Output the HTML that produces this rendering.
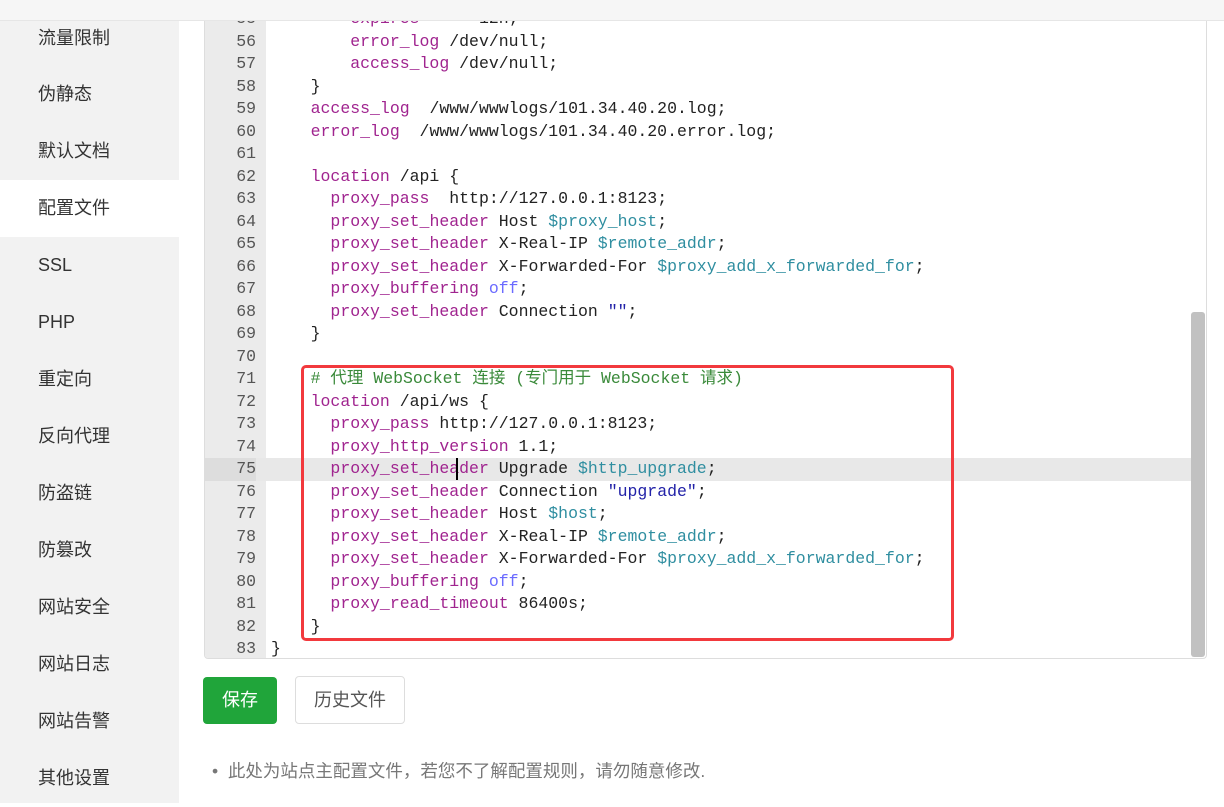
<!DOCTYPE html>
<html><head><meta charset="utf-8"><style>
*{margin:0;padding:0;box-sizing:border-box}
body{width:1224px;height:803px;overflow:hidden;background:#fff;font-family:"Liberation Sans","Noto Sans CJK SC",sans-serif;position:relative}
.top{position:absolute;left:0;top:0;width:1224px;height:21px;background:#f6f6f6;border-bottom:1px solid #e6e6e6;z-index:5}
.side{position:absolute;left:0;top:0;width:179px;height:803px;background:#f2f2f2}
.side div{position:absolute;left:0;width:179px;height:57px;line-height:57px;padding-left:38px;font-size:18px;color:#333}
.side .act{background:#fff}
.ed{position:absolute;left:204px;top:0;width:1003px;height:659px;border:1px solid #ddd;border-top:none;border-radius:0 0 4px 4px;overflow:hidden}
.gut{position:absolute;left:0;top:0;width:61px;height:659px;background:#ebebeb}
.code{position:absolute;left:0;top:8px;width:1000px;font-family:"Liberation Mono","Noto Sans CJK SC",monospace;font-size:16.5px;line-height:22.52px;color:#222}
.l{height:22.52px;white-space:pre;position:relative}
.n{display:inline-block;width:51px;text-align:right;color:#555;margin-right:15px}
.hl{background:#e8e8e8}
.k{color:#a0248f}.v{color:#2f8ea0}.s{color:#2222a8}.o{color:#6b6bff}.c{color:#3a8a3a}
.sb{position:absolute;left:986px;top:312px;width:14px;height:345px;background:#c1c1c1;border-radius:3px}
.red{position:absolute;left:301px;top:365px;width:653px;height:276px;border:3px solid #f2393d;border-radius:5px;z-index:3}
.btn1{position:absolute;left:203px;top:677px;width:74px;height:47px;background:#20a53a;color:#fff;border-radius:4px;font-size:18px;text-align:center;line-height:47px}
.btn2{position:absolute;left:295px;top:676px;width:110px;height:48px;border:1px solid #ddd;border-radius:4px;color:#555;font-size:18px;text-align:center;line-height:46px}
.tip{position:absolute;left:212px;top:758px;font-size:17.5px;color:#777}
.cur{position:absolute;left:456px;top:458px;width:2px;height:22px;background:#000;z-index:4}
</style></head><body>
<div class="top"></div>
<div class="side">
<div style="top:10px">流量限制</div>
<div style="top:66px">伪静态</div>
<div style="top:123px">默认文档</div>
<div class="act" style="top:180px">配置文件</div>
<div style="top:237px">SSL</div>
<div style="top:294px">PHP</div>
<div style="top:351px">重定向</div>
<div style="top:408px">反向代理</div>
<div style="top:465px">防盗链</div>
<div style="top:522px">防篡改</div>
<div style="top:579px">网站安全</div>
<div style="top:636px">网站日志</div>
<div style="top:693px">网站告警</div>
<div style="top:750px">其他设置</div>
</div>
<div class="ed">
<div class="gut"></div>
<div class="code">
<div class="l"><span class="n">55</span>        <span class="k">expires</span>      12h;</div>
<div class="l"><span class="n">56</span>        <span class="k">error_log</span> /dev/null;</div>
<div class="l"><span class="n">57</span>        <span class="k">access_log</span> /dev/null;</div>
<div class="l"><span class="n">58</span>    }</div>
<div class="l"><span class="n">59</span>    <span class="k">access_log</span>  /www/wwwlogs/101.34.40.20.log;</div>
<div class="l"><span class="n">60</span>    <span class="k">error_log</span>  /www/wwwlogs/101.34.40.20.error.log;</div>
<div class="l"><span class="n">61</span></div>
<div class="l"><span class="n">62</span>    <span class="k">location</span> /api {</div>
<div class="l"><span class="n">63</span>      <span class="k">proxy_pass</span>  http://127.0.0.1:8123;</div>
<div class="l"><span class="n">64</span>      <span class="k">proxy_set_header</span> Host <span class="v">$proxy_host</span>;</div>
<div class="l"><span class="n">65</span>      <span class="k">proxy_set_header</span> X-Real-IP <span class="v">$remote_addr</span>;</div>
<div class="l"><span class="n">66</span>      <span class="k">proxy_set_header</span> X-Forwarded-For <span class="v">$proxy_add_x_forwarded_for</span>;</div>
<div class="l"><span class="n">67</span>      <span class="k">proxy_buffering</span> <span class="o">off</span>;</div>
<div class="l"><span class="n">68</span>      <span class="k">proxy_set_header</span> Connection <span class="s">""</span>;</div>
<div class="l"><span class="n">69</span>    }</div>
<div class="l"><span class="n">70</span></div>
<div class="l"><span class="n">71</span>    <span class="c"># 代理 WebSocket 连接 (专门用于 WebSocket 请求)</span></div>
<div class="l"><span class="n">72</span>    <span class="k">location</span> /api/ws {</div>
<div class="l"><span class="n">73</span>      <span class="k">proxy_pass</span> http://127.0.0.1:8123;</div>
<div class="l"><span class="n">74</span>      <span class="k">proxy_http_version</span> 1.1;</div>
<div class="l hl"><span class="n" style="background:#ddd">75</span>      <span class="k">proxy_set_header</span> Upgrade <span class="v">$http_upgrade</span>;</div>
<div class="l"><span class="n">76</span>      <span class="k">proxy_set_header</span> Connection <span class="s">"upgrade"</span>;</div>
<div class="l"><span class="n">77</span>      <span class="k">proxy_set_header</span> Host <span class="v">$host</span>;</div>
<div class="l"><span class="n">78</span>      <span class="k">proxy_set_header</span> X-Real-IP <span class="v">$remote_addr</span>;</div>
<div class="l"><span class="n">79</span>      <span class="k">proxy_set_header</span> X-Forwarded-For <span class="v">$proxy_add_x_forwarded_for</span>;</div>
<div class="l"><span class="n">80</span>      <span class="k">proxy_buffering</span> <span class="o">off</span>;</div>
<div class="l"><span class="n">81</span>      <span class="k">proxy_read_timeout</span> 86400s;</div>
<div class="l"><span class="n">82</span>    }</div>
<div class="l"><span class="n">83</span>}</div>
</div>
<div class="sb"></div>
</div>
<div class="cur"></div>
<div class="red"></div>
<div class="btn1">保存</div>
<div class="btn2">历史文件</div>
<div class="tip">•&nbsp;&nbsp;此处为站点主配置文件，若您不了解配置规则，请勿随意修改.</div>
</body></html>
